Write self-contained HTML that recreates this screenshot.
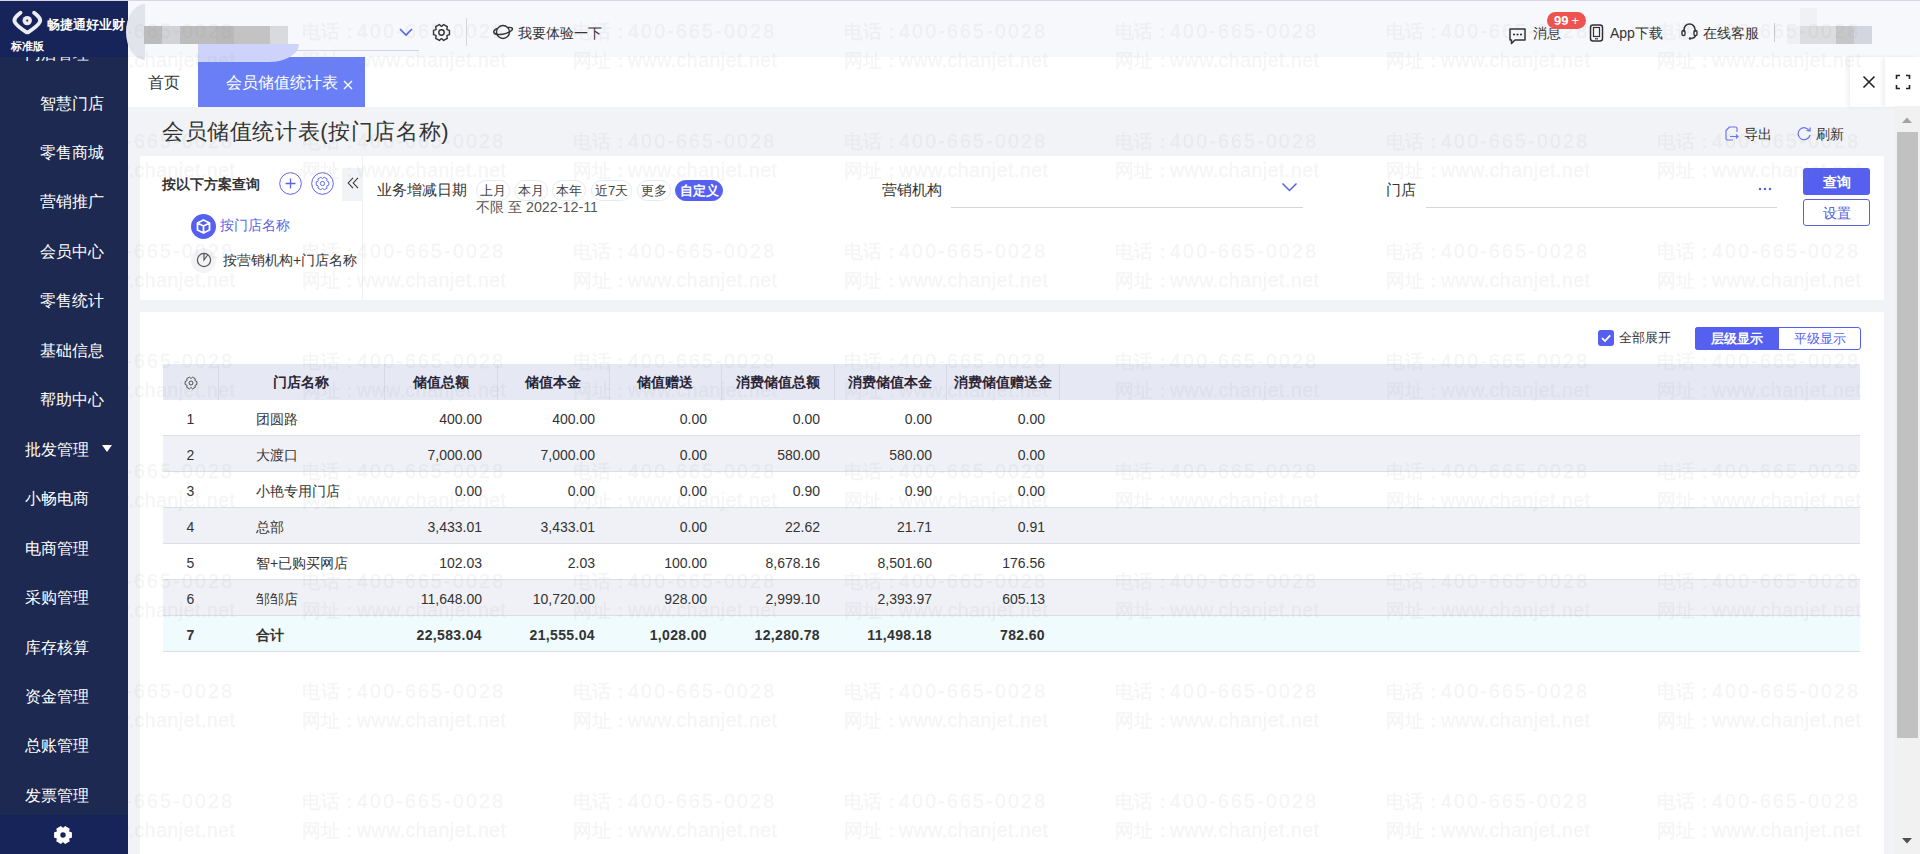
<!DOCTYPE html><html><head><meta charset="utf-8"><style>
*{margin:0;padding:0;box-sizing:border-box}
html,body{width:1920px;height:854px;overflow:hidden;background:#f2f3f6;font-family:"Liberation Sans",sans-serif;color:#333}
.a{position:absolute;white-space:nowrap}
.mi{position:absolute;color:#fff;font-size:16px;line-height:20px;white-space:nowrap}
.t13{font-size:13px;line-height:16px}
.t14{font-size:14px;line-height:18px}
.chip{position:absolute;height:21px;border:1px solid #e3ebf2;border-radius:11px;font-size:13px;line-height:19px;color:#444;text-align:center}
.cell{position:absolute;font-size:14px;line-height:18px;color:#333;white-space:nowrap}
</style></head><body>
<div class="a" style="left:0;top:0;width:1920px;height:1px;background:#d6d8df;z-index:9"></div>
<div class="a" style="left:128px;top:1px;width:1792px;height:56px;background:#f7f8fc"></div>
<div class="a" style="left:126px;top:4px;width:19px;height:56px;background:#e2e4ec;border-radius:19px 0 0 19px / 28px 0 0 28px;z-index:6"></div>
<div class="a" style="left:144px;top:26px;width:18px;height:18px;background:#bcbcbc;z-index:6"></div>
<div class="a" style="left:162px;top:26px;width:18px;height:18px;background:#d2d3d6;z-index:6"></div>
<div class="a" style="left:180px;top:26px;width:36px;height:18px;background:#bdbdbd;z-index:6"></div>
<div class="a" style="left:216px;top:26px;width:18px;height:18px;background:#b9b9b9;z-index:6"></div>
<div class="a" style="left:234px;top:26px;width:36px;height:18px;background:#c3c3c3;z-index:6"></div>
<div class="a" style="left:270px;top:26px;width:18px;height:18px;background:#d9dadd;z-index:6"></div>
<div class="a" style="left:296px;top:50px;width:123px;height:1px;background:#d3d4dc"></div>
<svg class="a" style="left:398px;top:26px" width="16" height="12" viewBox="0 0 16 12"><path d="M2 3 L8 9 L14 3" fill="none" stroke="#5563e0" stroke-width="1.6"/></svg>
<svg class="a" style="left:432px;top:23px" width="19" height="19" viewBox="0 0 24 24"><path d="M19.09 8.29 L22.05 9.31 L22.05 14.69 L19.09 15.71 L18.75 16.29 L19.35 19.35 L14.69 22.05 L12.34 19.99 L11.66 19.99 L9.31 22.05 L4.65 19.35 L5.25 16.29 L4.91 15.71 L1.95 14.69 L1.95 9.31 L4.91 8.29 L5.25 7.71 L4.65 4.65 L9.31 1.95 L11.66 4.01 L12.34 4.01 L14.69 1.95 L19.35 4.65 L18.75 7.71 Z" fill="none" stroke="#333" stroke-width="1.8" stroke-linejoin="round"/><circle cx="12" cy="12" r="3.4" fill="none" stroke="#333" stroke-width="1.8"/></svg>
<div class="a" style="left:466px;top:18px;width:1px;height:28px;background:#d5d6dc"></div>
<svg class="a" style="left:492px;top:23px" width="22" height="18" viewBox="0 0 22 18"><circle cx="11" cy="9" r="6.5" fill="none" stroke="#333" stroke-width="1.4"/><path d="M5 5.5 C0 8 1 11 6 11.5 C11 12 18 9.5 20 7 C21.5 5 19 4 16 4.5" fill="none" stroke="#333" stroke-width="1.4"/></svg>
<div class="a t13" style="left:518px;top:26px;font-size:13.6px;color:#333">我要体验一下</div>
<svg class="a" style="left:1508px;top:27px" width="19" height="18" viewBox="0 0 19 18"><path d="M2 2 H17 V13 H7 L3.5 16.5 V13 H2 Z" fill="none" stroke="#333" stroke-width="1.5" stroke-linejoin="round"/><circle cx="6" cy="7.5" r="1.1" fill="#333"/><circle cx="9.5" cy="7.5" r="1.1" fill="#333"/><circle cx="13" cy="7.5" r="1.1" fill="#333"/></svg>
<div class="a t13" style="left:1533px;top:26px;font-size:13.6px;color:#333">消息</div>
<div class="a" style="left:1547px;top:12px;width:39px;height:17px;background:#ef5350;border-radius:9px;color:#fff;font-size:13px;line-height:17px;font-weight:bold;text-align:center;letter-spacing:0px">99<span style="font-weight:normal;margin-left:3px">+</span></div>
<svg class="a" style="left:1589px;top:24px" width="15" height="18" viewBox="0 0 15 18"><rect x="1.5" y="1" width="12" height="16" rx="2.5" fill="none" stroke="#333" stroke-width="1.5"/><rect x="4.5" y="3.5" width="6" height="9" fill="none" stroke="#333" stroke-width="1.2"/><path d="M6 14.8 H9" stroke="#333" stroke-width="1.2"/></svg>
<div class="a t14" style="left:1610px;top:24px;color:#333">App下载</div>
<svg class="a" style="left:1681px;top:22px" width="17" height="18" viewBox="0 0 17 18"><path d="M3 10 V7.5 A5.5 5.5 0 0 1 14 7.5 V10" fill="none" stroke="#333" stroke-width="1.5"/><rect x="1" y="8.5" width="3" height="5" rx="1.2" fill="none" stroke="#333" stroke-width="1.4"/><rect x="13" y="8.5" width="3" height="5" rx="1.2" fill="none" stroke="#333" stroke-width="1.4"/><path d="M14.5 13.5 Q14 16 10 16.5" fill="none" stroke="#333" stroke-width="1.4"/><circle cx="9" cy="16.5" r="1.2" fill="#333"/></svg>
<div class="a t13" style="left:1703px;top:26px;font-size:13.7px;color:#333">在线客服</div>
<div class="a" style="left:1774px;top:23px;width:1px;height:19px;background:#c9cad0"></div>
<div class="a" style="left:1800px;top:8px;width:17px;height:18px;background:#f0f1f4"></div>
<div class="a" style="left:1787px;top:26px;width:13px;height:18px;background:#eef0f3"></div>
<div class="a" style="left:1800px;top:26px;width:36px;height:18px;background:#dcdddf"></div>
<div class="a" style="left:1836px;top:26px;width:18px;height:18px;background:#c6c7c9"></div>
<div class="a" style="left:1854px;top:26px;width:18px;height:18px;background:#d3d6de"></div>
<div class="a" style="left:128px;top:57px;width:1792px;height:50px;background:#fff"></div>
<div class="a t14" style="left:148px;top:73px;font-size:16px;line-height:20px;color:#333">首页</div>
<div class="a" style="left:198px;top:57px;width:167px;height:50px;background:#6a7ff6"></div>
<div class="a" style="left:198px;top:44px;width:101px;height:18px;background:#cdd3fa;border-radius:0 0 30px 0 / 0 0 18px 0"></div>
<div class="a" style="left:226px;top:73px;font-size:16px;line-height:20px;color:#fff">会员储值统计表</div>
<svg class="a" style="left:343px;top:80px" width="10" height="10" viewBox="0 0 10 10"><path d="M1 1 L9 9 M9 1 L1 9" stroke="#fff" stroke-width="1.3"/></svg>
<div class="a" style="left:1850px;top:57px;width:35px;height:50px;background:#fff;box-shadow:-3px 0 4px rgba(0,0,0,0.06)"></div>
<div class="a" style="left:1885px;top:57px;width:35px;height:50px;background:#fff;box-shadow:-3px 0 4px rgba(0,0,0,0.06)"></div>
<svg class="a" style="left:1862px;top:75px" width="14" height="14" viewBox="0 0 14 14"><path d="M1.5 1.5 L12.5 12.5 M12.5 1.5 L1.5 12.5" stroke="#222" stroke-width="1.6"/></svg>
<svg class="a" style="left:1895px;top:74px" width="16" height="16" viewBox="0 0 16 16"><path d="M1.5 5 V1.5 H5 M11 1.5 H14.5 V5 M14.5 11 V14.5 H11 M5 14.5 H1.5 V11" fill="none" stroke="#222" stroke-width="1.6"/></svg>
<div class="a" style="left:162px;top:118px;font-size:22px;letter-spacing:0.6px;line-height:28px;color:#333">会员储值统计表(按门店名称)</div>
<svg class="a" style="left:1725px;top:126px" width="14" height="15" viewBox="0 0 14 15"><path d="M12 6 V2.5 A1.5 1.5 0 0 0 10.5 1 H4.5 L1 4.5 V12.5 A1.5 1.5 0 0 0 2.5 14 H8" fill="none" stroke="#6a74f0" stroke-width="1.15" stroke-linejoin="round"/><path d="M5 10.5 H13 M11 8.5 L13 10.5 L11 12.5" fill="none" stroke="#6a74f0" stroke-width="1.15"/></svg>
<div class="a t13" style="left:1744px;top:127px;font-size:13.5px;color:#333">导出</div>
<svg class="a" style="left:1797px;top:126px" width="15" height="15" viewBox="0 0 15 15"><path d="M12.5 5 A6 6 0 1 0 13 9" fill="none" stroke="#6a74f0" stroke-width="1.25"/><path d="M9.5 4.5 L13 5 L13.2 1.5" fill="none" stroke="#6a74f0" stroke-width="1.25"/></svg>
<div class="a t13" style="left:1816px;top:127px;font-size:13.5px;color:#333">刷新</div>
<div class="a" style="left:140px;top:156px;width:1744px;height:144px;background:#fff"></div>
<div class="a" style="left:362px;top:156px;width:1px;height:144px;background:#f0f1f4"></div>
<div class="a t14" style="left:162px;top:176px;font-size:13.5px;font-weight:bold;color:#333">按以下方案查询</div>
<svg class="a" style="left:279px;top:172px" width="23" height="23" viewBox="0 0 23 23"><circle cx="11.5" cy="11.5" r="10.8" fill="none" stroke="#5d64e2" stroke-width="1"/><path d="M6.5 11.5 H16.5 M11.5 6.5 V16.5" stroke="#5a64e6" stroke-width="1.3"/></svg>
<svg class="a" style="left:311px;top:172px" width="23" height="23" viewBox="0 0 23 23"><circle cx="11.5" cy="11.5" r="10.8" fill="none" stroke="#5d64e2" stroke-width="1"/></svg>
<svg class="a" style="left:314.5px;top:176px" width="15" height="15" viewBox="0 0 24 24"><path d="M19.09 8.29 L22.05 9.31 L22.05 14.69 L19.09 15.71 L18.75 16.29 L19.35 19.35 L14.69 22.05 L12.34 19.99 L11.66 19.99 L9.31 22.05 L4.65 19.35 L5.25 16.29 L4.91 15.71 L1.95 14.69 L1.95 9.31 L4.91 8.29 L5.25 7.71 L4.65 4.65 L9.31 1.95 L11.66 4.01 L12.34 4.01 L14.69 1.95 L19.35 4.65 L18.75 7.71 Z" fill="none" stroke="#5a64e6" stroke-width="1.5" stroke-linejoin="round"/><circle cx="12" cy="12" r="3.4" fill="none" stroke="#5a64e6" stroke-width="1.5"/></svg>
<div class="a" style="left:342px;top:168px;width:21px;height:33px;background:#f2f3f6"></div>
<svg class="a" style="left:346px;top:176px" width="14" height="14" viewBox="0 0 14 14"><path d="M7 1.8 L2.2 7 L7 12.2 M12 1.8 L7.2 7 L12 12.2" fill="none" stroke="#333" stroke-width="1.1"/></svg>
<div class="a" style="left:191px;top:214px;width:25px;height:25px;border-radius:50%;background:#5560f0"></div>
<svg class="a" style="left:195px;top:218px" width="17" height="17" viewBox="0 0 17 17"><path d="M8.5 2 L14.5 5 V12 L8.5 15 L2.5 12 V5 Z M2.5 5 L8.5 8 L14.5 5 M8.5 8 V15" fill="none" stroke="#fff" stroke-width="1.8" stroke-linejoin="round"/></svg>
<div class="a t13" style="left:220px;top:218px;font-size:13.5px;color:#5c66e4">按门店名称</div>
<div class="a" style="left:191px;top:248px;width:25px;height:25px;border-radius:50%;background:#f3f3f5"></div>
<svg class="a" style="left:196px;top:252px" width="16" height="16" viewBox="0 0 16 16"><circle cx="8" cy="8" r="6.6" fill="none" stroke="#555" stroke-width="1.2"/><path d="M8 1.8 V8 L11.6 3" fill="none" stroke="#555" stroke-width="1.2"/></svg>
<div class="a t13" style="left:223px;top:252px;font-size:14px;color:#333">按营销机构+门店名称</div>
<div class="a t14" style="left:377px;top:181px;font-size:14.5px;color:#333">业务增减日期</div>
<div class="chip" style="left:476px;top:180px;width:34px">上月</div>
<div class="chip" style="left:514px;top:180px;width:34px">本月</div>
<div class="chip" style="left:552px;top:180px;width:34px">本年</div>
<div class="chip" style="left:591px;top:180px;width:41px">近7天</div>
<div class="chip" style="left:637px;top:180px;width:34px">更多</div>
<div class="chip" style="left:675px;top:180px;width:48px;background:#5560f0;border-color:#5560f0;color:#fff;font-weight:bold">自定义</div>
<div class="a t14" style="left:476px;top:198px;font-size:14.3px;color:#555">不限 至 2022-12-11</div>
<div class="a t14" style="left:882px;top:181px;font-size:14.5px;color:#333">营销机构</div>
<div class="a" style="left:951px;top:207px;width:352px;height:1px;background:#d6d7dc"></div>
<svg class="a" style="left:1281px;top:181px" width="17" height="12" viewBox="0 0 17 12"><path d="M1.5 2.5 L8.5 9.5 L15.5 2.5" fill="none" stroke="#5563e0" stroke-width="1.5"/></svg>
<div class="a t14" style="left:1386px;top:181px;font-size:14.5px;color:#333">门店</div>
<div class="a" style="left:1426px;top:207px;width:351px;height:1px;background:#d6d7dc"></div>
<div class="a" style="left:1758px;top:187px;width:14px;height:4px;background:radial-gradient(circle at 2px 2px,#5563e0 1.4px,transparent 1.6px) 0 0/5px 4px repeat-x"></div>
<div class="a" style="left:1803px;top:168px;width:67px;height:27px;background:#5560f0;border-radius:3px;color:#fff;font-size:14px;line-height:29px;font-weight:bold;text-align:center">查询</div>
<div class="a" style="left:1803px;top:199px;width:67px;height:27px;background:#fff;border:1px solid #5a63d6;border-radius:3px;color:#5560e0;font-size:14px;line-height:27px;text-align:center">设置</div>
<div class="a" style="left:140px;top:312px;width:1744px;height:542px;background:#fff"></div>
<div class="a" style="left:1598px;top:330px;width:16px;height:16px;background:#5560f0;border-radius:3px"></div>
<svg class="a" style="left:1598px;top:330px" width="16" height="16" viewBox="0 0 16 16"><path d="M4 8.2 L7 11 L12.2 5.3" fill="none" stroke="#fff" stroke-width="1.8"/></svg>
<div class="a t13" style="left:1619px;top:330px;color:#333">全部展开</div>
<div class="a" style="left:1695px;top:327px;width:166px;height:23px;border:1px solid #5560f0;border-radius:3px;background:#fff"></div>
<div class="a" style="left:1695px;top:327px;width:84px;height:23px;background:#5560f0;border-radius:3px 0 0 3px;color:#fff;font-size:13px;line-height:23px;font-weight:bold;text-align:center">层级显示</div>
<div class="a" style="left:1779px;top:327px;width:82px;height:23px;color:#5560f0;font-size:13px;line-height:23px;text-align:center">平级显示</div>
<div class="a" style="left:163px;top:364px;width:1697px;height:36px;background:#e6e9f4"></div>
<div class="a" style="left:218px;top:364px;width:1px;height:36px;background:#d6d9e6"></div>
<div class="a" style="left:384px;top:364px;width:1px;height:36px;background:#d6d9e6"></div>
<div class="a" style="left:497px;top:364px;width:1px;height:36px;background:#d6d9e6"></div>
<div class="a" style="left:609px;top:364px;width:1px;height:36px;background:#d6d9e6"></div>
<div class="a" style="left:721px;top:364px;width:1px;height:36px;background:#d6d9e6"></div>
<div class="a" style="left:834px;top:364px;width:1px;height:36px;background:#d6d9e6"></div>
<div class="a" style="left:946px;top:364px;width:1px;height:36px;background:#d6d9e6"></div>
<div class="a" style="left:1059px;top:364px;width:1px;height:36px;background:#d6d9e6"></div>
<svg class="a" style="left:184px;top:376px" width="14" height="14" viewBox="0 0 24 24"><path d="M19.09 8.29 L22.05 9.31 L22.05 14.69 L19.09 15.71 L18.75 16.29 L19.35 19.35 L14.69 22.05 L12.34 19.99 L11.66 19.99 L9.31 22.05 L4.65 19.35 L5.25 16.29 L4.91 15.71 L1.95 14.69 L1.95 9.31 L4.91 8.29 L5.25 7.71 L4.65 4.65 L9.31 1.95 L11.66 4.01 L12.34 4.01 L14.69 1.95 L19.35 4.65 L18.75 7.71 Z" fill="none" stroke="#444" stroke-width="1.6" stroke-linejoin="round"/><circle cx="12" cy="12" r="3.4" fill="none" stroke="#444" stroke-width="1.6"/></svg>
<div class="cell" style="left:218px;top:373px;width:166px;text-align:center;font-weight:bold;color:#2a2535">门店名称</div>
<div class="cell" style="left:384px;top:373px;width:113px;text-align:center;font-weight:bold;color:#2a2535">储值总额</div>
<div class="cell" style="left:497px;top:373px;width:112px;text-align:center;font-weight:bold;color:#2a2535">储值本金</div>
<div class="cell" style="left:609px;top:373px;width:112px;text-align:center;font-weight:bold;color:#2a2535">储值赠送</div>
<div class="cell" style="left:721px;top:373px;width:113px;text-align:center;font-weight:bold;color:#2a2535">消费储值总额</div>
<div class="cell" style="left:834px;top:373px;width:112px;text-align:center;font-weight:bold;color:#2a2535">消费储值本金</div>
<div class="cell" style="left:946px;top:373px;width:113px;text-align:center;font-weight:bold;color:#2a2535">消费储值赠送金</div>
<div class="a" style="left:163px;top:400px;width:1697px;height:36px;background:#fff"></div>
<div class="a" style="left:163px;top:435px;width:1697px;height:1px;background:#dcdee4"></div>
<div class="cell" style="left:163px;top:410px;width:55px;text-align:center;">1</div>
<div class="cell" style="left:256px;top:410px;">团圆路</div>
<div class="cell" style="left:332px;top:410px;width:150px;text-align:right;">400.00</div>
<div class="cell" style="left:445px;top:410px;width:150px;text-align:right;">400.00</div>
<div class="cell" style="left:557px;top:410px;width:150px;text-align:right;">0.00</div>
<div class="cell" style="left:670px;top:410px;width:150px;text-align:right;">0.00</div>
<div class="cell" style="left:782px;top:410px;width:150px;text-align:right;">0.00</div>
<div class="cell" style="left:895px;top:410px;width:150px;text-align:right;">0.00</div>
<div class="a" style="left:163px;top:436px;width:1697px;height:36px;background:#f0f1f6"></div>
<div class="a" style="left:163px;top:471px;width:1697px;height:1px;background:#dcdee4"></div>
<div class="cell" style="left:163px;top:446px;width:55px;text-align:center;">2</div>
<div class="cell" style="left:256px;top:446px;">大渡口</div>
<div class="cell" style="left:332px;top:446px;width:150px;text-align:right;">7,000.00</div>
<div class="cell" style="left:445px;top:446px;width:150px;text-align:right;">7,000.00</div>
<div class="cell" style="left:557px;top:446px;width:150px;text-align:right;">0.00</div>
<div class="cell" style="left:670px;top:446px;width:150px;text-align:right;">580.00</div>
<div class="cell" style="left:782px;top:446px;width:150px;text-align:right;">580.00</div>
<div class="cell" style="left:895px;top:446px;width:150px;text-align:right;">0.00</div>
<div class="a" style="left:163px;top:472px;width:1697px;height:36px;background:#fff"></div>
<div class="a" style="left:163px;top:507px;width:1697px;height:1px;background:#dcdee4"></div>
<div class="cell" style="left:163px;top:482px;width:55px;text-align:center;">3</div>
<div class="cell" style="left:256px;top:482px;">小艳专用门店</div>
<div class="cell" style="left:332px;top:482px;width:150px;text-align:right;">0.00</div>
<div class="cell" style="left:445px;top:482px;width:150px;text-align:right;">0.00</div>
<div class="cell" style="left:557px;top:482px;width:150px;text-align:right;">0.00</div>
<div class="cell" style="left:670px;top:482px;width:150px;text-align:right;">0.90</div>
<div class="cell" style="left:782px;top:482px;width:150px;text-align:right;">0.90</div>
<div class="cell" style="left:895px;top:482px;width:150px;text-align:right;">0.00</div>
<div class="a" style="left:163px;top:508px;width:1697px;height:36px;background:#f0f1f6"></div>
<div class="a" style="left:163px;top:543px;width:1697px;height:1px;background:#dcdee4"></div>
<div class="cell" style="left:163px;top:518px;width:55px;text-align:center;">4</div>
<div class="cell" style="left:256px;top:518px;">总部</div>
<div class="cell" style="left:332px;top:518px;width:150px;text-align:right;">3,433.01</div>
<div class="cell" style="left:445px;top:518px;width:150px;text-align:right;">3,433.01</div>
<div class="cell" style="left:557px;top:518px;width:150px;text-align:right;">0.00</div>
<div class="cell" style="left:670px;top:518px;width:150px;text-align:right;">22.62</div>
<div class="cell" style="left:782px;top:518px;width:150px;text-align:right;">21.71</div>
<div class="cell" style="left:895px;top:518px;width:150px;text-align:right;">0.91</div>
<div class="a" style="left:163px;top:544px;width:1697px;height:36px;background:#fff"></div>
<div class="a" style="left:163px;top:579px;width:1697px;height:1px;background:#dcdee4"></div>
<div class="cell" style="left:163px;top:554px;width:55px;text-align:center;">5</div>
<div class="cell" style="left:256px;top:554px;">智+已购买网店</div>
<div class="cell" style="left:332px;top:554px;width:150px;text-align:right;">102.03</div>
<div class="cell" style="left:445px;top:554px;width:150px;text-align:right;">2.03</div>
<div class="cell" style="left:557px;top:554px;width:150px;text-align:right;">100.00</div>
<div class="cell" style="left:670px;top:554px;width:150px;text-align:right;">8,678.16</div>
<div class="cell" style="left:782px;top:554px;width:150px;text-align:right;">8,501.60</div>
<div class="cell" style="left:895px;top:554px;width:150px;text-align:right;">176.56</div>
<div class="a" style="left:163px;top:580px;width:1697px;height:36px;background:#f0f1f6"></div>
<div class="a" style="left:163px;top:615px;width:1697px;height:1px;background:#dcdee4"></div>
<div class="cell" style="left:163px;top:590px;width:55px;text-align:center;">6</div>
<div class="cell" style="left:256px;top:590px;">邹邹店</div>
<div class="cell" style="left:332px;top:590px;width:150px;text-align:right;">11,648.00</div>
<div class="cell" style="left:445px;top:590px;width:150px;text-align:right;">10,720.00</div>
<div class="cell" style="left:557px;top:590px;width:150px;text-align:right;">928.00</div>
<div class="cell" style="left:670px;top:590px;width:150px;text-align:right;">2,999.10</div>
<div class="cell" style="left:782px;top:590px;width:150px;text-align:right;">2,393.97</div>
<div class="cell" style="left:895px;top:590px;width:150px;text-align:right;">605.13</div>
<div class="a" style="left:163px;top:616px;width:1697px;height:36px;background:#effbfd"></div>
<div class="a" style="left:163px;top:651px;width:1697px;height:1px;background:#dcdee4"></div>
<div class="cell" style="left:163px;top:626px;width:55px;text-align:center;font-weight:bold;letter-spacing:0.35px;">7</div>
<div class="cell" style="left:256px;top:626px;font-weight:bold;letter-spacing:0.35px;">合计</div>
<div class="cell" style="left:332px;top:626px;width:150px;text-align:right;font-weight:bold;letter-spacing:0.35px;">22,583.04</div>
<div class="cell" style="left:445px;top:626px;width:150px;text-align:right;font-weight:bold;letter-spacing:0.35px;">21,555.04</div>
<div class="cell" style="left:557px;top:626px;width:150px;text-align:right;font-weight:bold;letter-spacing:0.35px;">1,028.00</div>
<div class="cell" style="left:670px;top:626px;width:150px;text-align:right;font-weight:bold;letter-spacing:0.35px;">12,280.78</div>
<div class="cell" style="left:782px;top:626px;width:150px;text-align:right;font-weight:bold;letter-spacing:0.35px;">11,498.18</div>
<div class="cell" style="left:895px;top:626px;width:150px;text-align:right;font-weight:bold;letter-spacing:0.35px;">782.60</div>
<div class="a" style="left:1895px;top:106px;width:25px;height:748px;background:#f1f1f1"></div>
<div class="a" style="left:1897px;top:132px;width:21px;height:606px;background:#c1c1c1"></div>
<svg class="a" style="left:1901px;top:116px" width="12" height="8" viewBox="0 0 12 8"><path d="M1 7 L6 1.5 L11 7 Z" fill="#a3a3a3"/></svg>
<svg class="a" style="left:1901px;top:837px" width="12" height="8" viewBox="0 0 12 8"><path d="M1 1 L6 6.5 L11 1 Z" fill="#505050"/></svg>
<div class="a" style="left:0;top:1px;width:128px;height:853px;background:#1d2950"></div>
<div class="mi" style="left:25px;top:44px">门店管理</div>
<div class="a" style="left:0;top:1px;width:128px;height:56px;background:#16245a"></div>
<div class="a" style="left:0;top:815px;width:128px;height:39px;background:#17245a"></div>
<svg class="a" style="left:0;top:0" width="50" height="40" viewBox="0 0 50 40"><path d="M20.5 12.8 C17 15.5 13.2 18.5 14.8 22 C16.5 25.5 23 30 26.6 32.3" fill="none" stroke="#ececf2" stroke-width="3.9" stroke-linecap="round"/><path d="M34.1 12.8 C37.6 15.5 41.4 18.5 39.8 22 C38.1 25.5 31.6 30 28 32.3" fill="none" stroke="#ececf2" stroke-width="3.9" stroke-linecap="round"/><circle cx="27.2" cy="20.6" r="4.7" fill="#ececf2"/><circle cx="27.2" cy="20.6" r="1.1" fill="#3a2f50"/></svg>
<div class="a" style="left:47px;top:18px;color:#fff;font-size:12.5px;line-height:15px;font-weight:bold">畅捷通好业财</div>
<div class="a" style="left:11px;top:39px;color:#fff;font-size:11px;line-height:14px;font-weight:bold">标准版</div>
<div class="mi" style="left:40px;top:93.5px">智慧门店</div>
<div class="mi" style="left:40px;top:142.9px">零售商城</div>
<div class="mi" style="left:40px;top:192.4px">营销推广</div>
<div class="mi" style="left:40px;top:241.9px">会员中心</div>
<div class="mi" style="left:40px;top:291.3px">零售统计</div>
<div class="mi" style="left:40px;top:340.8px">基础信息</div>
<div class="mi" style="left:40px;top:390.2px">帮助中心</div>
<div class="mi" style="left:25px;top:439.7px">批发管理</div>
<div class="mi" style="left:25px;top:489.1px">小畅电商</div>
<div class="mi" style="left:25px;top:538.5px">电商管理</div>
<div class="mi" style="left:25px;top:588.0px">采购管理</div>
<div class="mi" style="left:25px;top:637.5px">库存核算</div>
<div class="mi" style="left:25px;top:686.9px">资金管理</div>
<div class="mi" style="left:25px;top:736.4px">总账管理</div>
<div class="mi" style="left:25px;top:785.8px">发票管理</div>
<svg class="a" style="left:101px;top:444px" width="12" height="9" viewBox="0 0 12 9"><path d="M1 1 H11 L6 8 Z" fill="#fff"/></svg>
<svg class="a" style="left:54px;top:826px" width="18" height="18" viewBox="0 0 24 24"><path d="M20.12 8.13 L23.11 9.02 L23.11 14.98 L20.12 15.87 L19.42 17.10 L20.13 20.13 L14.98 23.11 L12.71 20.97 L11.29 20.97 L9.02 23.11 L3.87 20.13 L4.58 17.10 L3.88 15.87 L0.89 14.98 L0.89 9.02 L3.88 8.13 L4.58 6.90 L3.87 3.87 L9.02 0.89 L11.29 3.03 L12.71 3.03 L14.98 0.89 L20.13 3.87 L19.42 6.90 Z" fill="#fff" stroke="#fff" stroke-width="1.5" stroke-linejoin="round"/><circle cx="12" cy="12" r="3.6" fill="#17245a"/></svg>
<svg class="a" style="left:0;top:0;z-index:50;pointer-events:none" width="1920" height="854">
<defs><pattern id="wm" x="31" y="0" width="271" height="110" patternUnits="userSpaceOnUse">
<g opacity="0.082" fill="#808080" stroke="#808080" stroke-width="0.35" font-family="Liberation Sans, sans-serif">
<text x="0" y="37.5" font-size="19">电话：</text>
<text x="55" y="37.5" font-size="19.5" textLength="146" lengthAdjust="spacing">400-665-0028</text>
<text x="0" y="67" font-size="19">网址：</text>
<text x="55" y="67" font-size="19.5" textLength="149" lengthAdjust="spacing">www.chanjet.net</text>
</g></pattern></defs>
<rect x="128" y="0" width="1792" height="854" fill="url(#wm)"/></svg>
</body></html>
